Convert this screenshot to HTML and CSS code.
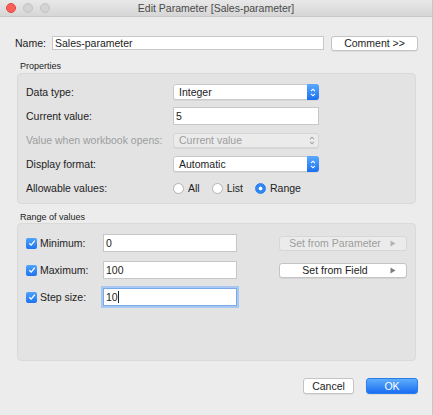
FILE: index.html
```html
<!DOCTYPE html>
<html lang="en">
<head>
  <meta charset="UTF-8">
  <title>Edit Parameter</title>
  <link rel="stylesheet" href="styles.css">
</head>
<body>
  <div class="window">
    <!-- Title bar with the window controls -->
    <div class="titlebar">
      <div class="lights">
        <span class="light close"></span>
        <span class="light"></span>
        <span class="light"></span>
      </div>
      <div class="title">Edit Parameter [Sales-parameter]</div>
    </div>

    <div class="name-row">
      <label class="name-label">Name:</label>
      <div class="field name-field">Sales-parameter</div>
      <button class="btn comment-btn">Comment &gt;&gt;</button>
    </div>

    <div class="legend">Properties</div>
    <div class="panel props">
      <div class="row">
        <span class="label">Data type:</span>
        <div class="select">
          <span class="select-text">Integer</span>
          <span class="stepper">
            <svg width="6" height="9" viewBox="0 0 6 9"><path d="M1 3.2 L3 1.2 L5 3.2 M1 5.8 L3 7.8 L5 5.8" fill="none" stroke="#fff" stroke-width="1.1"/></svg>
          </span>
        </div>
      </div>
      <div class="row">
        <span class="label">Current value:</span>
        <div class="field prop-field">5</div>
      </div>
      <div class="row">
        <span class="label disabled">Value when workbook opens:</span>
        <div class="select select-disabled">
          <span class="select-text">Current value</span>
          <span class="stepper-plain">
            <svg width="6" height="9" viewBox="0 0 6 9"><path d="M1 3.2 L3 1.2 L5 3.2 M1 5.8 L3 7.8 L5 5.8" fill="none" stroke="#a5a5a5" stroke-width="1.1"/></svg>
          </span>
        </div>
      </div>
      <div class="row">
        <span class="label">Display format:</span>
        <div class="select">
          <span class="select-text">Automatic</span>
          <span class="stepper">
            <svg width="6" height="9" viewBox="0 0 6 9"><path d="M1 3.2 L3 1.2 L5 3.2 M1 5.8 L3 7.8 L5 5.8" fill="none" stroke="#fff" stroke-width="1.1"/></svg>
          </span>
        </div>
      </div>
      <div class="row">
        <span class="label">Allowable values:</span>
        <div class="radios">
          <span class="radio"></span><span class="radio-text">All</span>
          <span class="radio"></span><span class="radio-text">List</span>
          <span class="radio checked"></span><span class="radio-text">Range</span>
        </div>
      </div>
    </div>

    <div class="legend range-legend">Range of values</div>
    <div class="panel range">
      <div class="row">
        <span class="check">
          <svg width="8" height="8" viewBox="0 0 8 8"><path d="M1.3 4.2 L3.2 6.1 L6.8 1.6" fill="none" stroke="#fff" stroke-width="1.3"/></svg>
        </span>
        <span class="range-label">Minimum:</span>
        <div class="field range-field">0</div>
        <button class="btn side-btn" disabled>
          <span class="side-text">Set from Parameter</span>
          <svg width="6" height="7" viewBox="0 0 6 7"><path d="M0.5 0.5 L5.5 3.5 L0.5 6.5 Z" fill="#b3b3b3"/></svg>
        </button>
      </div>
      <div class="row">
        <span class="check">
          <svg width="8" height="8" viewBox="0 0 8 8"><path d="M1.3 4.2 L3.2 6.1 L6.8 1.6" fill="none" stroke="#fff" stroke-width="1.3"/></svg>
        </span>
        <span class="range-label">Maximum:</span>
        <div class="field range-field">100</div>
        <button class="btn side-btn">
          <span class="side-text">Set from Field</span>
          <svg width="6" height="7" viewBox="0 0 6 7"><path d="M0.5 0.5 L5.5 3.5 L0.5 6.5 Z" fill="#7d7d7d"/></svg>
        </button>
      </div>
      <div class="row">
        <span class="check">
          <svg width="8" height="8" viewBox="0 0 8 8"><path d="M1.3 4.2 L3.2 6.1 L6.8 1.6" fill="none" stroke="#fff" stroke-width="1.3"/></svg>
        </span>
        <span class="range-label">Step size:</span>
        <div class="field range-field focused">10<span class="caret"></span></div>
      </div>
    </div>

    <div class="footer">
      <button class="btn cancel-btn">Cancel</button>
      <button class="btn ok-btn">OK</button>
    </div>
  </div>
</body>
</html>
```

FILE: styles.css
```css
/* Dialog window */
body {
  margin: 0;
  font-family: "Liberation Sans", Arial, sans-serif;
  font-size: 10.5px;
  color: #222;
  background: #ececec;
}
.window {
  width: 433px;
  height: 415px;
  box-sizing: border-box;
  border-right: 1px solid #c6c6c6;
  background: #ececec;
}

/* Title bar */
.titlebar {
  display: grid;
  grid-template-columns: 1fr auto 1fr;
  align-items: center;
  height: 17px;
  box-sizing: border-box;
  background: linear-gradient(#e8e8e8, #d6d6d6);
  border-bottom: 1px solid #c9c9c9;
}
.lights {
  display: flex;
  gap: 7px;
  padding-left: 6px;
}
.light {
  width: 8px;
  height: 8px;
  border-radius: 50%;
  background: #d3d3d3;
  border: 0.5px solid #c3c3c3;
}
.light.close {
  background: #fc5f57;
  border-color: #e2463f;
}
.title {
  color: #4a4a4a;
  font-size: 10.5px;
}

/* Shared controls */
.field {
  box-sizing: border-box;
  background: #fff;
  border: 1px solid #c7c7c7;
  padding-left: 2px;
  display: flex;
  align-items: center;
  white-space: nowrap;
}
.btn {
  box-sizing: border-box;
  font: inherit;
  color: #222;
  background: #fff;
  border: 1px solid #c4c4c4;
  border-radius: 3px;
  box-shadow: 0 1px 0 rgba(0, 0, 0, 0.06);
  padding: 0;
}

/* Name row */
.name-row {
  display: flex;
  align-items: center;
  margin-top: 19px;
  padding-left: 15px;
  height: 14px;
}
.name-label {
  width: 37px;
}
.name-field {
  width: 272px;
  height: 14px;
}
.comment-btn {
  width: 87px;
  height: 15px;
  margin-left: 7px;
}

/* Group boxes */
.legend {
  margin-top: 10px;
  padding-left: 20px;
  height: 12px;
  line-height: 12px;
  font-size: 9px;
}
.panel {
  margin-top: 1px;
  margin-left: 17px;
  width: 399px;
  box-sizing: border-box;
  background: #e3e3e3;
  border: 1px solid #dadada;
  border-radius: 4px;
  padding-left: 8px;
  display: flex;
  flex-direction: column;
}
.props {
  padding-top: 9px;
  padding-bottom: 6px;
  gap: 6px;
}
.row {
  display: flex;
  align-items: center;
  height: 18px;
}
.label {
  width: 147px;
}
.label.disabled {
  color: #9d9d9d;
}
.prop-field {
  width: 146px;
  height: 18px;
}

/* Pop-up buttons */
.select {
  width: 146px;
  height: 16px;
  box-sizing: border-box;
  display: flex;
  align-items: center;
  background: #fff;
  border: 1px solid #c9c9c9;
  border-radius: 3px;
  box-shadow: 0 1px 0 rgba(0, 0, 0, 0.05);
}
.select-text {
  flex: 1;
  padding-left: 5px;
}
.stepper {
  width: 12px;
  height: 16px;
  margin: -1px -1px -1px 0;
  border-radius: 0 3px 3px 0;
  background: linear-gradient(#5aaafc, #1c70f0);
  display: flex;
  align-items: center;
  justify-content: center;
}
.select-disabled {
  height: 15px;
  background: #ebebeb;
  border-color: #d6d6d6;
  color: #9d9d9d;
}
.stepper-plain {
  width: 12px;
  display: flex;
  justify-content: center;
}

/* Radio group */
.radios {
  display: flex;
  align-items: center;
}
.radio {
  width: 11px;
  height: 11px;
  box-sizing: border-box;
  border-radius: 50%;
  background: #fff;
  border: 1px solid #b4b4b4;
  margin-right: 4px;
}
.radio.checked {
  background: radial-gradient(circle, #fff 0 1.7px, #2f87f6 2.2px);
  border-color: #2a7fef;
}
.radio-text {
  margin-right: 12px;
}

/* Range of values */
.range-legend {
  margin-top: 7px;
}
.range {
  margin-top: 0;
  height: 138px;
  padding-top: 10px;
  gap: 9px;
}
.check {
  width: 11px;
  height: 11px;
  border-radius: 2px;
  background: linear-gradient(#4ea3fb, #1f73f0);
  display: flex;
  align-items: center;
  justify-content: center;
  margin-right: 3px;
}
.range-label {
  width: 63px;
}
.range-field {
  width: 134px;
  height: 18px;
}
.range-field.focused {
  border-color: #7aa9e6;
  box-shadow: 0 0 0 2px #a7c8f2;
}
.caret {
  width: 1px;
  height: 12px;
  background: #222;
}
.side-btn {
  width: 128px;
  height: 15px;
  margin-left: 42px;
  display: flex;
  align-items: center;
  padding-right: 10px;
}
.side-text {
  flex: 1;
  text-align: center;
}
.side-btn:disabled {
  background: #ebebeb;
  border-color: #d7d7d7;
  color: #9d9d9d;
  box-shadow: none;
}

/* Dialog buttons */
.footer {
  display: flex;
  justify-content: flex-end;
  gap: 12px;
  margin-top: 17px;
  padding-right: 14px;
}
.cancel-btn {
  width: 51px;
  height: 16px;
}
.ok-btn {
  width: 52px;
  height: 16px;
  color: #fff;
  background: linear-gradient(#5fadfc, #1a6ef1);
  border-color: #2a7de9;
}
```
